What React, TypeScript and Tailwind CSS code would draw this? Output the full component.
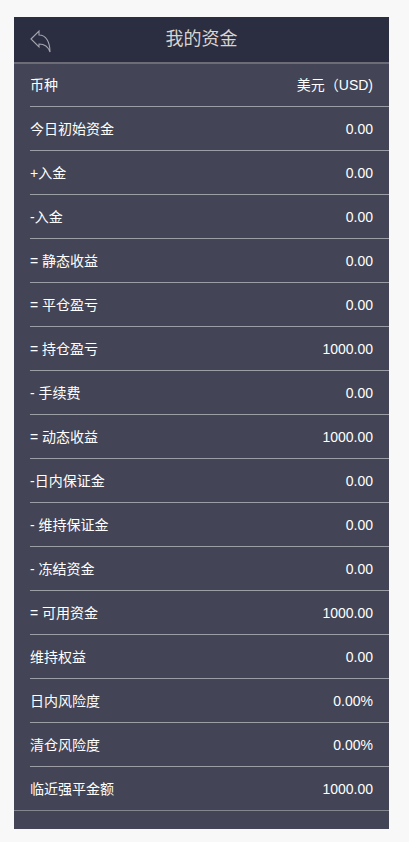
const rows: [string, string][] = [
  ['币种', '美元（USD)'],
  ['今日初始资金', '0.00'],
  ['+入金', '0.00'],
  ['-入金', '0.00'],
  ['= 静态收益', '0.00'],
  ['= 平仓盈亏', '0.00'],
  ['= 持仓盈亏', '1000.00'],
  ['- 手续费', '0.00'],
  ['= 动态收益', '1000.00'],
  ['-日内保证金', '0.00'],
  ['- 维持保证金', '0.00'],
  ['- 冻结资金', '0.00'],
  ['= 可用资金', '1000.00'],
  ['维持权益', '0.00'],
  ['日内风险度', '0.00%'],
  ['清仓风险度', '0.00%'],
  ['临近强平金额', '1000.00'],
];

export default function App() {
  return (
    <div
      className="h-[842px] bg-[#f8f8f8] pl-[14px] pt-[17px] pr-[20px] pb-[13px] overflow-hidden"
      style={{ fontFamily: '"Liberation Sans", "Noto Sans CJK SC", sans-serif' }}
    >
      <div className="h-[812px] bg-[#434556]">
        <div className="h-[47px] flex items-center relative bg-[#2b2d40] border-b-2 border-[#6b6c78]">
          <svg
            className="absolute left-[15px] top-[12px]"
            width="24"
            height="25"
            viewBox="0 0 24 25"
            fill="none"
            stroke="#a4a5ae"
            strokeWidth="1.1"
          >
            <path d="M2 10 L10 2 L10 6 C17 6 21 13 21 23 C19 17 15 15 10 15 L10 18 Z" />
          </svg>
          <div className="w-full text-center text-[18px] text-[#d9d4cf]">我的资金</div>
        </div>
        {rows.map(([label, value], i) => (
          <div
            key={i}
            className={
              i === 0
                ? 'h-[43px] ml-[16px] flex items-center justify-between pr-[16px] border-b border-[#9c9da6]'
                : i === rows.length - 1
                  ? 'h-[44px] pt-px flex items-center justify-between px-[16px] border-b border-[#85868f]'
                  : 'h-[44px] pt-px ml-[16px] flex items-center justify-between pr-[16px] border-b border-[#9c9da6]'
            }
          >
            <span className="text-[14px] text-white">{label}</span>
            <span className="text-[14px] text-white">{value}</span>
          </div>
        ))}
      </div>
    </div>
  );
}
